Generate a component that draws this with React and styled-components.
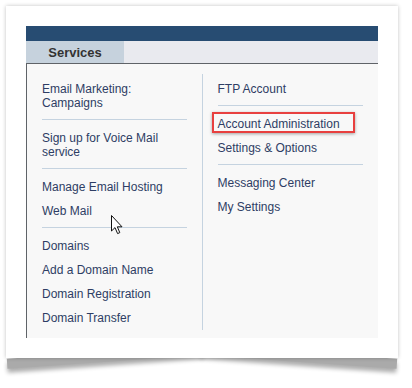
import React from 'react'
import styled, { createGlobalStyle } from 'styled-components'

const Global = createGlobalStyle`
  body {
    margin: 0;
    background: #ffffff;
    font-family: "Liberation Sans", Arial, sans-serif;
  }
`

const Page = styled.div`
  width: 412px;
  height: 388px;
  position: relative;
  overflow: hidden;
`

const Card = styled.div`
  position: relative;
  margin: 6px;
  width: 352px;
  height: 312px;
  padding: 20px;
  background: #fff;
  box-shadow: 0 0 4px rgba(0, 0, 0, 0.24);

  &::before,
  &::after {
    content: '';
    position: absolute;
    z-index: -1;
    bottom: 3px;
    width: 50%;
    height: 10px;
    background: #aaa;
    box-shadow: 0 4px 4px rgba(0, 0, 0, 0.32);
  }
  &::before {
    left: 1px;
    transform-origin: right bottom;
    transform: rotate(-4deg);
  }
  &::after {
    right: 1px;
    transform-origin: left bottom;
    transform: rotate(4deg);
  }
`

const TopBar = styled.div`
  height: 15px;
  background: #274c72;
`

const TabBar = styled.div`
  height: 22px;
  display: flex;
  background: #e9eaef;
  border-bottom: 1px solid #5f6368;
`

const Tab = styled.div`
  width: 98px;
  display: flex;
  align-items: center;
  justify-content: center;
  background: #c6d2dd;
  color: #333;
  font-size: 13px;
  font-weight: bold;
`

const Body = styled.div`
  display: grid;
  grid-template-columns: 1fr 1fr;
  background: #f8f8f8;
  border-left: 1px solid #5f6368;
  padding: 10px 0 8px;
`

const Column = styled.div`
  padding: 3px 15px 0;
  border-right: ${p => (p.divider ? '1px solid #c5d3e0' : 'none')};
`

const Item = styled.div`
  position: relative;
  padding: 5px 0;
  font-size: 12px;
  line-height: 14px;
  color: #2e3d64;
  white-space: nowrap;

  ${p =>
    p.marked &&
    `
    &::after {
      content: '';
      position: absolute;
      top: 0px;
      left: -6px;
      width: 139px;
      height: 17px;
      border: 2px solid #e8403f;
      box-shadow: 0 1px 3px rgba(0, 0, 0, 0.35);
    }
  `}
`

const Rule = styled.div`
  height: 1px;
  margin: 4px 0 6px;
  background: #c5d3e0;
`

const Cursor = styled.svg`
  position: absolute;
  left: 111px;
  top: 215px;
`

const Arrow = () => (
  <Cursor width="13" height="20" viewBox="0 0 13 20">
    <path
      d="M0.5 0.5 L0.5 16 L4 12.6 L6.6 18.6 L8.8 17.6 L6.3 11.8 L11 11.8 Z"
      fill="#fff"
      stroke="#111"
      strokeWidth="1"
      strokeLinejoin="round"
    />
  </Cursor>
)

const App = () => {
  return (
    <Page>
      <Global />
      <Card>
        <TopBar />
        <TabBar>
          <Tab>Services</Tab>
        </TabBar>
        <Body>
          <Column divider>
            <Item>
              Email Marketing:
              <br />
              Campaigns
            </Item>
            <Rule />
            <Item>
              Sign up for Voice Mail
              <br />
              service
            </Item>
            <Rule />
            <Item>Manage Email Hosting</Item>
            <Item>Web Mail</Item>
            <Rule />
            <Item>Domains</Item>
            <Item>Add a Domain Name</Item>
            <Item>Domain Registration</Item>
            <Item>Domain Transfer</Item>
          </Column>
          <Column>
            <Item>FTP Account</Item>
            <Rule />
            <Item marked>Account Administration</Item>
            <Item>Settings &amp; Options</Item>
            <Rule />
            <Item>Messaging Center</Item>
            <Item>My Settings</Item>
          </Column>
        </Body>
      </Card>
      <Arrow />
    </Page>
  )
}

export default App
